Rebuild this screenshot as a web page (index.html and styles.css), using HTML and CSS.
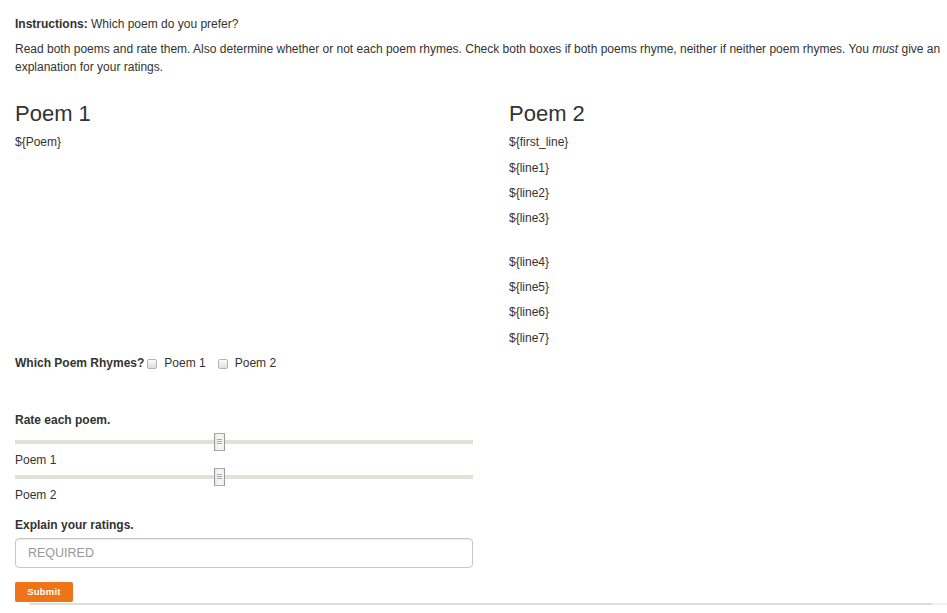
FILE: index.html
```html
<!DOCTYPE html>
<html lang="en">
<head>
<meta charset="utf-8">
<title>Which poem do you prefer?</title>
<link rel="stylesheet" href="styles.css">
</head>
<body>
<div class="page">
  <p class="line"><strong>Instructions:</strong> Which poem do you prefer?</p>
  <p class="line">Read both poems and rate them. Also determine whether or not each poem rhymes. Check both boxes if both poems rhyme, neither if neither poem rhymes. You <em>must</em> give an explanation for your ratings.</p>

  <div class="poems">
    <section class="poem">
      <h2 class="poem-title">Poem 1</h2>
      <p class="line">${Poem}</p>
    </section>
    <section class="poem">
      <h2 class="poem-title">Poem 2</h2>
      <p class="line">${first_line}</p>
      <p class="line">${line1}</p>
      <p class="line">${line2}</p>
      <p class="line">${line3}</p>
      <div class="stanza-gap"></div>
      <p class="line">${line4}</p>
      <p class="line">${line5}</p>
      <p class="line">${line6}</p>
      <p class="line">${line7}</p>
    </section>
  </div>

  <div class="rhymes">
    <strong>Which Poem Rhymes?</strong>
    <label class="check first"><input type="checkbox" class="box"><span>Poem 1</span></label>
    <label class="check"><input type="checkbox" class="box"><span>Poem 2</span></label>
  </div>

  <div class="form">
    <div class="label-strong">Rate each poem.</div>
    <div class="slider"><div class="track"></div><span class="handle" style="left:43.45%"><span class="grip"></span></span></div>
    <div class="slider-label">Poem 1</div>
    <div class="slider"><div class="track"></div><span class="handle" style="left:43.45%"><span class="grip"></span></span></div>
    <div class="slider-label">Poem 2</div>

    <div class="label-strong explain">Explain your ratings.</div>
    <input class="text-input" type="text" placeholder="REQUIRED">
    <button class="submit" type="button">Submit</button>
  </div>
  <div class="rule"></div>
</div>
</body>
</html>
```

FILE: styles.css
```css
html, body {
  margin: 0;
  padding: 0;
  background: #fff;
}
body {
  font-family: "Liberation Sans", Arial, sans-serif;
  font-size: 12px;
  line-height: 18px;
  color: #333;
}
.page {
  padding: 15px 0 0 15px;
  width: 926px;
}
.line {
  margin: 0 0 7.33px;
}
.poems {
  display: grid;
  grid-template-columns: 458px 1fr;
  column-gap: 36px;
}
.poem-title {
  margin: 18px 0 7.5px;
  font-size: 22px;
  font-weight: 400;
  line-height: 1.1;
  color: #333;
}
.stanza-gap {
  height: 18px;
}
.rhymes {
  display: flex;
  align-items: center;
  height: 18px;
}
.check {
  display: flex;
  align-items: center;
  margin-left: 12px;
}
.check.first {
  margin-left: 3px;
}
.box {
  appearance: none;
  -webkit-appearance: none;
  width: 10px;
  height: 10px;
  margin: 2px 7px 0 0;
  border: 1px solid #b5b5b5;
  border-radius: 2px;
  background: linear-gradient(#fbfbfb, #dedede);
  box-sizing: border-box;
}
.form {
  width: 458px;
  margin-top: 39px;
}
.label-strong {
  font-weight: bold;
}
.slider {
  position: relative;
  height: 18px;
  margin-top: 4px;
  display: flex;
  align-items: center;
}
.slider + .slider-label + .slider {
  margin-top: -1px;
}
.track {
  flex: 1;
  height: 4px;
  background: #e3dfd9;
}
.handle {
  position: absolute;
  top: 0;
  width: 11px;
  height: 18px;
  box-sizing: border-box;
  border: 1px solid #a9a9a9;
  border-left-color: #9a9a9a;
  border-right-color: #9a9a9a;
  background: linear-gradient(90deg, #e6e6e6, #f8f8f8 40%, #f0f0f0);
  display: flex;
  align-items: center;
  justify-content: center;
}
.grip {
  width: 5px;
  height: 5px;
  background: repeating-linear-gradient(#a8a8a8 0 1px, transparent 1px 2px);
}
.slider-label {
  height: 18px;
}
.explain {
  margin-top: 12px;
}
.text-input {
  display: block;
  width: 458px;
  height: 30px;
  margin-top: 4px;
  box-sizing: border-box;
  padding: 0 12px;
  border: 1px solid #c8c8c8;
  border-radius: 4px;
  box-shadow: inset 0 1px 1px rgba(0, 0, 0, 0.075);
  font-family: "Liberation Sans", Arial, sans-serif;
  font-size: 12.5px;
  color: #555;
}
.text-input::placeholder {
  color: #999;
}
.submit {
  display: block;
  width: 58px;
  height: 20px;
  margin-top: 14px;
  padding: 0;
  border: none;
  border-radius: 2px;
  background: #ee7417;
  color: #fff;
  font-family: "Liberation Sans", Arial, sans-serif;
  font-size: 9.5px;
  font-weight: bold;
  letter-spacing: 0.2px;
}
.rule {
  height: 2px;
  margin: 1px 0 0 15px;
  width: 917px;
  background: linear-gradient(90deg, #dddddd 0, #dddddd 902px, #f1f1f1 902px);
}
```
